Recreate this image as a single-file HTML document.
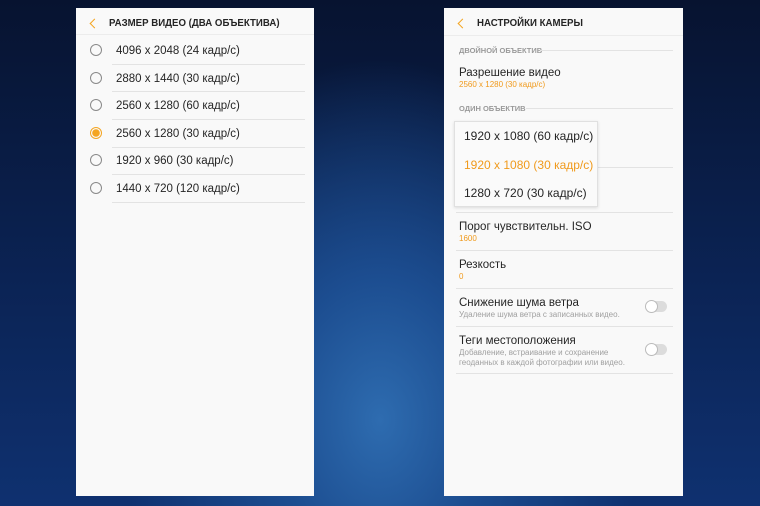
<!DOCTYPE html>
<html><head><meta charset="utf-8"><style>
*{margin:0;padding:0;box-sizing:border-box}
body{width:760px;height:506px;overflow:hidden;position:relative;font-family:"Liberation Sans",sans-serif;
background:radial-gradient(ellipse 260px 360px at 380px 420px,#2e6cb0 0%,#1c4d90 40%,rgba(12,40,90,0) 100%),linear-gradient(180deg,#071330 0%,#0b2354 55%,#0f3170 100%);}
.p{position:absolute;top:8px;width:238px;height:488px;background:#f9f9f9;color:#252525}
.t{position:absolute;font-size:11.5px;white-space:nowrap}
.h{font-weight:bold;font-size:10.5px;transform:scaleX(.92);transform-origin:left}
.back{position:absolute;width:7px;height:7px;border-left:1.5px solid #f4a522;border-bottom:1.5px solid #f4a522;transform:rotate(45deg)}
.ln{position:absolute;height:1px;background:#e3e3e3}
.r{position:absolute;width:12px;height:12px;border:1.3px solid #8a8a8a;border-radius:50%}
.sec{position:absolute;font-size:7.5px;color:#9a9a9a;font-weight:bold}
.sub{position:absolute;font-size:8px;color:#a0a0a0;white-space:nowrap}
.o{color:#f09a1c}
.tg{position:absolute;width:21px;height:11px;border-radius:6px;background:#dcdcdc}
.tg:after{content:"";position:absolute;left:-1px;top:-1px;width:13px;height:13px;border-radius:50%;background:#fff;border:1px solid #bbb;box-sizing:border-box}
</style></head><body>
<div class="p" style="left:76px">
<div class="back" style="left:15px;top:12px"></div>
<div class="t h" style="left:33px;top:9px">РАЗМЕР ВИДЕО (ДВА ОБЪЕКТИВА)</div>
<div class="ln" style="left:0;top:26px;width:238px;background:#ececec"></div>
<div class="r" style="left:14px;top:36px"></div><div class="t" style="left:40px;top:37px">4096 x 2048 (24 кадр/с)</div>
<div class="ln" style="left:36px;top:56px;width:193px"></div>
<div class="r" style="left:14px;top:64px"></div><div class="t" style="left:40px;top:65px">2880 x 1440 (30 кадр/с)</div>
<div class="ln" style="left:36px;top:83px;width:193px"></div>
<div class="r" style="left:14px;top:91px"></div><div class="t" style="left:40px;top:92px">2560 x 1280 (60 кадр/с)</div>
<div class="ln" style="left:36px;top:111px;width:193px"></div>
<div class="r" style="left:14px;top:119px;border-color:#f4a522;background:radial-gradient(circle,#f4a522 0 3.5px,transparent 4px)"></div><div class="t" style="left:40px;top:120px">2560 x 1280 (30 кадр/с)</div>
<div class="ln" style="left:36px;top:139px;width:193px"></div>
<div class="r" style="left:14px;top:146px"></div><div class="t" style="left:40px;top:147px">1920 x 960 (30 кадр/с)</div>
<div class="ln" style="left:36px;top:166px;width:193px"></div>
<div class="r" style="left:14px;top:174px"></div><div class="t" style="left:40px;top:175px">1440 x 720 (120 кадр/с)</div>
<div class="ln" style="left:36px;top:194px;width:193px"></div>
</div>
<div class="p" style="left:444px;width:239px">
<div class="back" style="left:15px;top:12px"></div>
<div class="t h" style="left:33px;top:9px">НАСТРОЙКИ КАМЕРЫ</div>
<div class="ln" style="left:0;top:27px;width:239px;background:#ececec"></div>
<div class="sec" style="left:15px;top:38px">ДВОЙНОЙ ОБЪЕКТИВ</div><div class="ln" style="left:96px;top:42px;width:133px"></div>
<div class="t" style="left:15px;top:59px">Разрешение видео</div>
<div class="sub o" style="left:15px;top:72px">2560 x 1280 (30 кадр/с)</div>
<div class="sec" style="left:15px;top:96px">ОДИН ОБЪЕКТИВ</div><div class="ln" style="left:82px;top:100px;width:147px"></div>
<div class="ln" style="left:12px;top:159px;width:217px"></div>
<div class="ln" style="left:12px;top:204px;width:217px"></div>
<div style="position:absolute;left:10px;top:113px;width:144px;height:86px;background:#fafafa;border:1px solid #e0e0e0;box-shadow:0 1px 3px rgba(0,0,0,.12)">
<div class="t" style="left:9px;top:7px;font-size:12px">1920 x 1080 (60 кадр/с)</div>
<div class="t o" style="left:9px;top:36px;font-size:12px">1920 x 1080 (30 кадр/с)</div>
<div class="t" style="left:9px;top:64px;font-size:12px">1280 x 720 (30 кадр/с)</div>
</div>
<div class="t" style="left:15px;top:213px">Порог чувствительн. ISO</div>
<div class="sub o" style="left:15px;top:226px">1600</div>
<div class="ln" style="left:12px;top:242px;width:217px"></div>
<div class="t" style="left:15px;top:251px">Резкость</div>
<div class="sub o" style="left:15px;top:264px">0</div>
<div class="ln" style="left:12px;top:280px;width:217px"></div>
<div class="t" style="left:15px;top:289px">Снижение шума ветра</div>
<div class="sub" style="left:15px;top:302px">Удаление шума ветра с записанных видео.</div>
<div class="tg" style="left:202px;top:293px"></div>
<div class="ln" style="left:12px;top:318px;width:217px"></div>
<div class="t" style="left:15px;top:327px">Теги местоположения</div>
<div class="sub" style="left:15px;top:340px">Добавление, встраивание и сохранение</div>
<div class="sub" style="left:15px;top:350px">геоданных в каждой фотографии или видео.</div>
<div class="tg" style="left:202px;top:336px"></div>
<div class="ln" style="left:12px;top:365px;width:217px"></div>
</div>
</body></html>
